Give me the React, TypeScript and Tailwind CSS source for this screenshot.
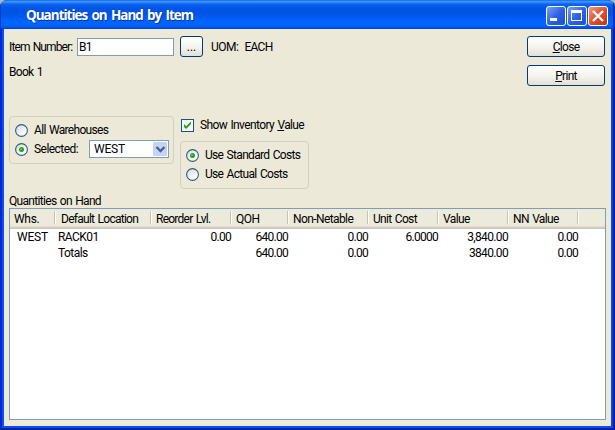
import React from "react";

function Radio({ on }: { on?: boolean }) {
  return (
    <svg width="13" height="13" viewBox="0 0 13 13" className="block shrink-0">
      <defs>
        <linearGradient id="radioFace" x1="0" y1="0" x2="1" y2="1">
          <stop offset="0.1" stopColor="#dcdcd7" />
          <stop offset="0.8" stopColor="#ffffff" />
        </linearGradient>
      </defs>
      <circle cx="6.5" cy="6.5" r="5.9" fill="url(#radioFace)" stroke="#2c5b89" strokeWidth="1.1" />
      {on && <circle cx="6.5" cy="6.5" r="2.5" fill="#21a121" />}
      {on && <circle cx="6" cy="6" r="1" fill="#55d551" />}
    </svg>
  );
}

function PushButton({ children, className }: { children: React.ReactNode; className: string }) {
  return (
    <button
      className={`flex h-[21px] shrink-0 items-center justify-center rounded-[3px] border border-[#003c74] bg-linear-to-b from-white via-[#f5f4ef] to-[#e3dfd3] ${className}`}
    >
      {children}
    </button>
  );
}

function Caption({ children, close }: { children: React.ReactNode; close?: boolean }) {
  return (
    <div
      className={`h-[20px] w-[20px] rounded-[3px] border border-white ${
        close
          ? "bg-linear-to-br from-[#f0997c] via-[#e05030] to-[#c03508]"
          : "bg-linear-to-br from-[#7ba0f5] via-[#2f62e2] to-[#1b50d8]"
      }`}
    >
      <svg width="18" height="18" viewBox="0 0 18 18" className="block">
        {children}
      </svg>
    </div>
  );
}

const headers = [
  { text: "Whs.", w: "w-[46px] pl-[4px]", t: "tracking-[-0.3px]" },
  { text: "Default Location", w: "w-[96px] pl-[5px]", t: "tracking-[-0.73px]" },
  { text: "Reorder Lvl.", w: "w-[80px] pl-[4px]", t: "tracking-[-0.75px]" },
  { text: "QOH", w: "w-[57px] pl-[4px]", t: "tracking-[-0.5px]" },
  { text: "Non-Netable", w: "w-[80px] pl-[4px]", t: "tracking-[-0.6px]" },
  { text: "Unit Cost", w: "w-[70px] pl-[4px]", t: "tracking-[-0.68px]" },
  { text: "Value", w: "w-[70px] pl-[4px]", t: "tracking-[-0.6px]" },
  { text: "NN Value", w: "w-[70px] pl-[4px]", t: "tracking-[-0.65px]" },
];

const rows = [
  ["WEST", "RACK01", "0.00", "640.00", "0.00", "6.0000", "3,840.00", "0.00"],
  ["", "Totals", "", "640.00", "0.00", "", "3840.00", "0.00"],
];

const cells = [
  "w-[46px] pl-[7px] tracking-[-0.2px]",
  "w-[96px] pl-[2px] tracking-[-0.55px]",
  "w-[80px] pr-px text-right tracking-[-0.75px]",
  "w-[57px] pr-px text-right tracking-[-0.75px]",
  "w-[80px] pr-px text-right tracking-[-0.75px]",
  "w-[70px] pr-px text-right tracking-[-0.75px]",
  "w-[70px] pr-px text-right tracking-[-0.65px]",
  "w-[70px] pr-px text-right tracking-[-0.75px]",
];

export default function App() {
  return (
    <div className="h-[430px] w-[615px] overflow-hidden bg-[#b5b8b0] font-[Roboto,'Liberation_Sans',sans-serif] text-[12px] leading-[16px] tracking-[-0.68px] [word-spacing:1px] whitespace-nowrap text-black">
      <div className="flex h-full flex-col overflow-hidden rounded-t-[7px] bg-[#0831d9]">
        <header className="flex h-[29px] shrink-0 items-center justify-between bg-[linear-gradient(to_bottom,#0058e0_0,#3e95ff_1px,#3b90ff_2px,#0b66ee_4px,#0055e5_8px,#0054e3_14px,#0162fa_20px,#0066ff_25px,#005bf0_27px,#003dd0_29px)] pr-[7px] pl-[26px] shadow-[inset_1px_0_#0838c8,inset_-2px_0_#0030b8]">
          <h1 className="font-['Open_Sans',sans-serif] text-[13.5px] leading-[20px] font-bold tracking-[-1px] [word-spacing:1.7px] text-white [text-shadow:1px_1px_#0a3899]">
            Quantities on Hand by Item
          </h1>
          <div className="flex gap-px pt-[3px]">
            <Caption>
              <rect x="3" y="11" width="7" height="3" fill="#fff" />
            </Caption>
            <Caption>
              <path d="M3 3h11v11H3zM4 6v7h9V6z" fillRule="evenodd" fill="#fff" />
            </Caption>
            <Caption close>
              <path d="M4 4l10 10M14 4l-10 10" stroke="#fff" strokeWidth="2.3" />
            </Caption>
          </div>
        </header>
        <main className="flex flex-1 flex-col border-r-2 border-b-2 border-l-2 border-r-[#001fa8] border-b-[#001fa8] border-l-[#0026d2] bg-[#ece9d8] pr-[7px] pb-[8px] pl-[7px] shadow-[inset_2px_-2px_#0a50ee,inset_-2px_0_#0444e0]">
          <div className="flex h-[87px] shrink-0 justify-between pt-[7px] pr-px">
            <div>
              <div className="flex h-[21px] items-center">
                <span className="w-[68px] tracking-[-0.88px]">Item Number:</span>
                <div className="mr-[6px] flex h-[18px] w-[97px] items-center border border-[#7f9db9] bg-white pl-px">B1</div>
                <PushButton className="w-[23px]"><span className="tracking-normal">...</span></PushButton>
                <span className="ml-[8px] tracking-[-0.5px]">UOM:</span>
                <span className="ml-[6px] tracking-[-0.7px]">EACH</span>
              </div>
              <div className="pt-[7px]">Book 1</div>
            </div>
            <div className="flex flex-col gap-[8px]">
              <PushButton className="w-[78px]"><span className="underline">C</span>lose</PushButton>
              <PushButton className="w-[78px]"><span className="underline">P</span>rint</PushButton>
            </div>
          </div>
          <div className="flex h-[78px] shrink-0 items-start gap-[6px]">
            <section className="flex h-[48px] w-[165px] flex-col gap-px rounded-[4px] border border-[#d0d0bf] pt-[4px] pl-[5px]">
              <div className="flex h-[18px] items-center gap-[6px]">
                <Radio />
                <span>All Warehouses</span>
              </div>
              <div className="flex h-[18px] items-center">
                <Radio on />
                <span className="ml-[6px] w-[55px] tracking-[-0.55px]">Selected:</span>
                <div className="flex h-[18px] w-[80px] shrink-0 items-center justify-between border border-[#7f9db9] bg-white pl-[4px]">
                  <span className="tracking-[-0.2px]">WEST</span>
                  <svg width="15" height="16" viewBox="0 0 15 16" className="block">
                    <rect x="0" y="1" width="14" height="14" rx="1.5" fill="#c3d3fd" />
                    <path d="M3.500 6l4 4 4-4" fill="none" stroke="#4d6185" strokeWidth="2.4" />
                  </svg>
                </div>
              </div>
            </section>
            <div>
              <div className="flex h-[18px] items-center gap-[6px] pl-px">
                <svg width="13" height="13" viewBox="0 0 13 13" className="block">
                  <rect x="0.5" y="0.5" width="12" height="12" fill="#f7f7f4" stroke="#1c5180" />
                  <path d="M3 5v3l2 2 5-5V2.500L5 7.300z" fill="#21a121" />
                </svg>
                <span className="tracking-[-0.62px]">Show Inventory <span className="underline">V</span>alue</span>
              </div>
              <section className="mt-[7px] flex h-[48px] w-[129px] flex-col gap-px rounded-[4px] border border-[#d0d0bf] pt-[4px] pl-[5px]">
                <div className="flex h-[18px] items-center gap-[6px]">
                  <Radio on />
                  <span>Use Standard Costs</span>
                </div>
                <div className="flex h-[18px] items-center gap-[6px]">
                  <Radio />
                  <span>Use Actual Costs</span>
                </div>
              </section>
            </div>
          </div>
          <div className="h-[14px] shrink-0 leading-[15px]">Quantities on Hand</div>
          <div className="flex-1 border border-[#7f9db9] bg-white">
            <div className="flex h-[20px] bg-[#ebeadb] pb-[3px] shadow-[inset_0_-1px_#cbc7b8,inset_0_-2px_#d6d2c2,inset_0_-3px_#e2decd]">
              {headers.map((h) => (
                <div key={h.text} className={`flex shrink-0 items-center justify-between ${h.w} ${h.t}`}>
                  <span className="pt-[3px]">{h.text}</span>
                  <span className="h-[13px] w-[2px] border-r border-l border-r-white border-l-[#c7c5b2]" />
                </div>
              ))}
            </div>
            {rows.map((r, i) => (
              <div key={i} className="flex h-[16px]">
                {r.map((c, j) => (
                  <span key={j} className={`shrink-0 ${cells[j]}`}>{c}</span>
                ))}
              </div>
            ))}
          </div>
        </main>
      </div>
    </div>
  );
}
